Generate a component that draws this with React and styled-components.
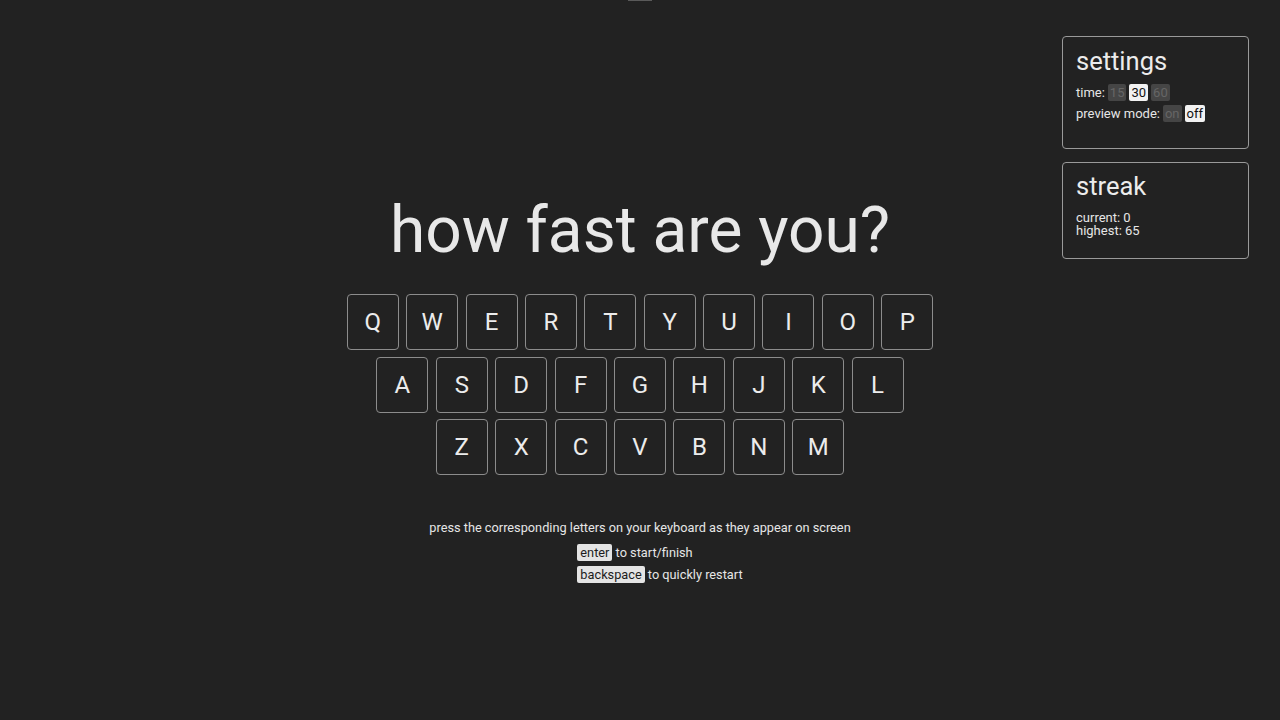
import React, { useState } from "react";
import styled, { createGlobalStyle } from "styled-components";

const Global = createGlobalStyle`
    html, body {
        margin: 0;
        padding: 0;
        background: #222222;
    }
    body {
        font-family: Roboto, "Liberation Sans", sans-serif;
        color: #e6e6e6;
    }
`;

const Page = styled.div`
    min-height: 720px;
    display: grid;
    grid-template-columns: 1fr auto 1fr;
    grid-template-rows: 1px auto;
`;

const Notch = styled.div`
    grid-column: 1 / -1;
    justify-self: center;
    width: 24px;
    height: 1px;
    background: #5a5a5a;
`;

const Main = styled.main`
    grid-column: 2;
    padding-top: 192px;
    display: flex;
    flex-direction: column;
    align-items: center;
`;

const Title = styled.h1`
    margin: 0;
    font-size: 64px;
    font-weight: 400;
    line-height: 75px;
    color: #e8e8e8;
`;

const Keyboard = styled.div`
    margin-top: 26px;
    display: flex;
    flex-direction: column;
    align-items: center;
    gap: 6.7px;
`;

const Row = styled.div`
    display: flex;
    gap: 7.4px;
`;

const Key = styled.div`
    width: 52px;
    height: 56px;
    box-sizing: border-box;
    border: 1px solid #8c8c8c;
    border-radius: 4px;
    display: flex;
    align-items: center;
    justify-content: center;
    font-size: 24px;
    color: #ececec;
    background: ${p => (p.$lit ? "#3a3a3a" : "transparent")};
`;

const Help = styled.div`
    margin-top: 45px;
    display: flex;
    flex-direction: column;
    align-items: center;
    font-size: 12.75px;
`;

const HelpLine = styled.p`
    margin: 0;
    line-height: 15px;
`;

const Shortcuts = styled.ul`
    margin: 7px 0 0;
    padding-left: 40px;
    list-style: none;
`;

const Shortcut = styled.li`
    line-height: 22px;
`;

const Kbd = styled.kbd`
    font-family: inherit;
    font-size: 12.75px;
    background: #e4e4e4;
    color: #1c1c1c;
    padding: 1px 3px;
    border-radius: 2px;
`;

const Side = styled.aside`
    grid-column: 3;
    justify-self: end;
    margin: 35px 31px 0 0;
    display: flex;
    flex-direction: column;
    gap: 13px;
`;

const Panel = styled.section`
    width: 187px;
    box-sizing: border-box;
    border: 1px solid #9a9a9a;
    border-radius: 4px;
    padding: ${p => p.$top}px 13px ${p => p.$bottom}px;
`;

const PanelTitle = styled.h2`
    margin: 0 0 6px;
    font-size: 25.5px;
    font-weight: 400;
    line-height: 30px;
    color: #ececec;
`;

const Option = styled.div`
    font-size: 13px;
    line-height: 21px;
`;

const Toggle = styled.button`
    font-family: inherit;
    font-size: 13px;
    border: none;
    border-radius: 2px;
    padding: 1px 2px;
    margin-left: 3px;
    cursor: pointer;
    background: ${p => (p.$active ? "#f2f2f2" : "#454545")};
    color: ${p => (p.$active ? "#111111" : "#666666")};
`;

const Stats = styled.div`
    margin-top: 10px;
    font-size: 13px;
    line-height: 13px;
`;

const rows = ["QWERTYUIOP", "ASDFGHJKL", "ZXCVBNM"];

function App() {
    const [time, setTime] = useState(30);
    const [preview, setPreview] = useState(false);

    return (
        <>
            <Global />
            <Page>
                <Notch />
                <Main>
                    <Title>how fast are you?</Title>
                    <Keyboard>
                        {rows.map(row => (
                            <Row key={row}>
                                {row.split("").map(letter => (
                                    <Key key={letter}>{letter}</Key>
                                ))}
                            </Row>
                        ))}
                    </Keyboard>
                    <Help>
                        <HelpLine>press the corresponding letters on your keyboard as they appear on screen</HelpLine>
                        <Shortcuts>
                            <Shortcut><Kbd>enter</Kbd> to start/finish</Shortcut>
                            <Shortcut><Kbd>backspace</Kbd> to quickly restart</Shortcut>
                        </Shortcuts>
                    </Help>
                </Main>
                <Side>
                    <Panel $top={9} $bottom={24}>
                        <PanelTitle>settings</PanelTitle>
                        <Option>
                            time:
                            {[15, 30, 60].map(t => (
                                <Toggle key={t} $active={time === t} onClick={() => setTime(t)}>{t}</Toggle>
                            ))}
                        </Option>
                        <Option>
                            preview mode:
                            <Toggle $active={preview} onClick={() => setPreview(true)}>on</Toggle>
                            <Toggle $active={!preview} onClick={() => setPreview(false)}>off</Toggle>
                        </Option>
                    </Panel>
                    <Panel $top={8} $bottom={21}>
                        <PanelTitle>streak</PanelTitle>
                        <Stats>
                            current: 0<br />
                            highest: 65
                        </Stats>
                    </Panel>
                </Side>
            </Page>
        </>
    );
}

export default App;
